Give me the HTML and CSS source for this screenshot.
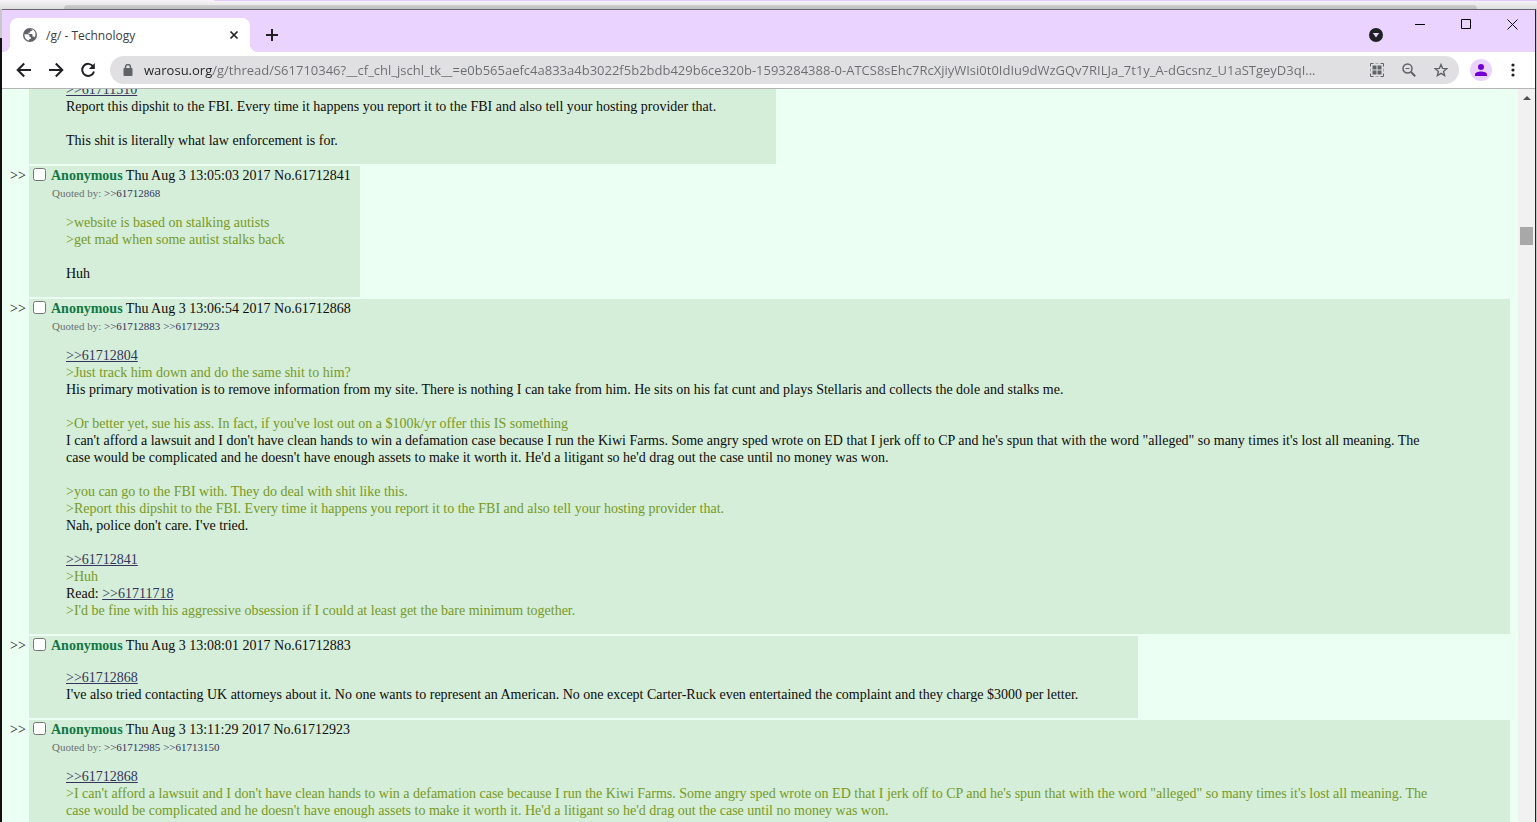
FILE: index.html
```html
<!DOCTYPE html>
<html lang="en">
<head>
<meta charset="utf-8">
<title>/g/ - Technology</title>
<link rel="stylesheet" href="styles.css">
</head>
<body>
<div class="backdrop"><div class="backdrop-bar"></div></div>
<div class="window">
  <header class="tabs">
    <div class="tab">
      <svg class="globe" viewBox="0 0 14 14" width="14" height="14" aria-hidden="true"><circle cx="7" cy="7" r="7" fill="#5f6368"/><path d="M1.500 6.200H4.500c1.200 0 2 .8 2 1.800v1h1.300v1.500c0 .5-.3.800-.8.800H6v1.200C3.200 12 1.200 9.500 1.500 6.200zM7 1.500h2.500c2 .9 3 2.700 3 5 0 1-.3 2-.8 2.800-.3-.6-.8-.9-1.500-.9H9.500V6.800c0-.5-.3-.8-.8-.8H5.500V4.800h1c.5 0 .8-.3.8-.8V3h1c.6 0 1-.4 1-1z" fill="#fff"/></svg>
      <span class="tab-title">/g/ - Technology</span>
      <button class="tab-close" aria-label="Close tab"><svg viewBox="0 0 10 10" width="10" height="10"><path d="M1.500 1.500l7 7M8.500 1.500l-7 7" stroke="#202124" stroke-width="1.700"/></svg></button>
    </div>
    <button class="new-tab" aria-label="New tab"><svg viewBox="0 0 12 12" width="12" height="12"><path d="M6 0v12M0 6h12" stroke="#202124" stroke-width="2"/></svg></button>
    <button class="search-tabs" aria-label="Search tabs"><svg viewBox="0 0 14 14" width="14" height="14"><circle cx="7" cy="7" r="7" fill="#202124"/><path d="M3.800 5h6.400L7 9.500z" fill="#ebd3ff"/></svg></button>
    <div class="controls">
      <button aria-label="Minimize"><svg viewBox="0 0 11 11" width="11" height="11"><path d="M0 5.500h10" stroke="#000"/></svg></button>
      <button aria-label="Maximize"><svg viewBox="0 0 11 11" width="11" height="11"><path d="M.5.5h9v9h-9z" fill="none" stroke="#000"/></svg></button>
      <button aria-label="Close"><svg viewBox="0 0 11 11" width="11" height="11"><path d="M.5.500l10 10M10.500.500l-10 10" stroke="#000"/></svg></button>
    </div>
  </header>
  <nav class="toolbar">
    <button aria-label="Back"><svg viewBox="0 0 16 16" width="16" height="16"><path d="M15 8H2M8.200 1.500 1.700 8l6.500 6.500" fill="none" stroke="#202124" stroke-width="2"/></svg></button>
    <button aria-label="Forward"><svg viewBox="0 0 16 16" width="16" height="16"><path d="M1 8h13M7.800 1.500 14.300 8l-6.500 6.500" fill="none" stroke="#202124" stroke-width="2"/></svg></button>
    <button aria-label="Reload"><svg viewBox="0 0 16 16" width="16" height="16"><path d="M13.200 4.500A6 6 0 1 0 14 9.500" fill="none" stroke="#202124" stroke-width="2"/><path d="M14.800 1v6H8.800z" fill="#202124"/></svg></button>
    <div class="omnibox">
      <svg viewBox="0 0 10 12" width="10" height="12" aria-hidden="true"><path d="M2.500 5V3a2.500 2.500 0 0 1 5 0v2" fill="none" stroke="#5f6368" stroke-width="1.400"/><rect x=".5" y="4" width="9" height="8" rx="1" fill="#5f6368"/></svg>
      <input class="url" type="text" aria-label="Address" value="warosu.org/g/thread/S61710346?__cf_chl_jschl_tk__=e0b565aefc4a833a4b3022f5b2bdb429b6ce320b-1593284388-0-ATCS8sEhc7RcXjiyWIsi0t0IdIu9dWzGQv7RILJa_7t1y_A-dGcsnz_U1aSTgeyD3qI...">
      <button aria-label="QR code"><svg viewBox="0 0 14 14" width="14" height="14"><path d="M.5 3.500v-3h3M10.500.500h3v3M.500 10.500v3h3M10.500 13.500h3v-3" fill="none" stroke="#5f6368"/><path d="M5.500.500h3M5.500 13.500h3M.5 5.500v3M13.500 5.500v3" stroke="#a5a6a9"/><path d="M2.500 2.500h4v4h-4zM7.500 2.500h4v4h-4zM2.500 7.500h4v4h-4zM7.500 7.500h4v4h-4z" fill="#5f6368"/></svg></button>
      <button aria-label="Zoom"><svg viewBox="0 0 14 14" width="14" height="14"><circle cx="5.500" cy="5.500" r="4.500" fill="none" stroke="#5f6368" stroke-width="1.500"/><path d="M3.500 5.500h4" stroke="#5f6368"/><path d="m9 9 4.200 4.200" stroke="#5f6368" stroke-width="2"/></svg></button>
      <button aria-label="Bookmark"><svg viewBox="0 0 14 14" width="14" height="14"><path d="m7 1.500 1.600 3.900 4.200.3-3.200 2.700 1 4.100L7 10.300l-3.600 2.200 1-4.100L1.200 5.700l4.200-.3z" fill="none" stroke="#5f6368" stroke-width="1.400"/></svg></button>
    </div>
    <button class="avatar" aria-label="Profile"><svg viewBox="0 0 12 12" width="12" height="12"><circle cx="6" cy="3" r="3" fill="#7300d4"/><path d="M0 12v-1.500C0 8.500 3 7.500 6 7.500s6 1 6 3V12z" fill="#7300d4"/></svg></button>
    <button class="menu" aria-label="Menu"><svg viewBox="0 0 4 14" width="4" height="14"><circle cx="2" cy="2" r="1.600" fill="#202124"/><circle cx="2" cy="7" r="1.600" fill="#202124"/><circle cx="2" cy="12" r="1.600" fill="#202124"/></svg></button>
  </nav>
  <div class="viewport">
    <main class="thread">
      <article class="post">
        <div class="reply">
          <p class="message"><a href="#61711510">&gt;&gt;61711510</a><br>Report this dipshit to the FBI. Every time it happens you report it to the FBI and also tell your hosting provider that.<br><br>This shit is literally what law enforcement is for.</p>
        </div>
      </article>
      <article class="post">
        <span class="marker">&gt;&gt;</span>
        <div class="reply">
          <div class="head"><label><input type="checkbox"><b>Anonymous</b> Thu Aug 3 13:05:03 2017</label> <a href="#61712841">No.61712841</a></div>
          <div class="quoted">Quoted by: <a href="#61712868">&gt;&gt;61712868</a></div>
          <p class="message"><q>&gt;website is based on stalking autists</q><br><q>&gt;get mad when some autist stalks back</q><br><br>Huh</p>
        </div>
      </article>
      <article class="post">
        <span class="marker">&gt;&gt;</span>
        <div class="reply">
          <div class="head"><label><input type="checkbox"><b>Anonymous</b> Thu Aug 3 13:06:54 2017</label> <a href="#61712868">No.61712868</a></div>
          <div class="quoted">Quoted by: <a href="#61712883">&gt;&gt;61712883</a> <a href="#61712923">&gt;&gt;61712923</a></div>
          <p class="message"><a href="#61712804">&gt;&gt;61712804</a><br><q>&gt;Just track him down and do the same shit to him?</q><br>His primary motivation is to remove information from my site. There is nothing I can take from him. He sits on his fat cunt and plays Stellaris and collects the dole and stalks me.<br><br><q>&gt;Or better yet, sue his ass. In fact, if you've lost out on a $100k/yr offer this IS something</q><br>I can't afford a lawsuit and I don't have clean hands to win a defamation case because I run the Kiwi Farms. Some angry sped wrote on ED that I jerk off to CP and he's spun that with the word "alleged" so many times it's lost all meaning. The case&nbsp;would be complicated and he doesn't have enough assets to make it worth it. He'd a litigant so he'd drag out the case until no money was won.<br><br><q>&gt;you can go to the FBI with. They do deal with shit like this.</q><br><q>&gt;Report this dipshit to the FBI. Every time it happens you report it to the FBI and also tell your hosting provider that.</q><br>Nah, police don't care. I've tried.<br><br><a href="#61712841">&gt;&gt;61712841</a><br><q>&gt;Huh</q><br>Read: <a href="#61711718">&gt;&gt;61711718</a><br><q>&gt;I'd be fine with his aggressive obsession if I could at least get the bare minimum together.</q></p>
        </div>
      </article>
      <article class="post">
        <span class="marker">&gt;&gt;</span>
        <div class="reply">
          <div class="head"><label><input type="checkbox"><b>Anonymous</b> Thu Aug 3 13:08:01 2017</label> <a href="#61712883">No.61712883</a></div>
          <p class="message"><a href="#61712868">&gt;&gt;61712868</a><br>I've also tried contacting UK attorneys about it. No one wants to represent an American. No one except Carter-Ruck even entertained the complaint and they charge $3000 per letter.</p>
        </div>
      </article>
      <article class="post">
        <span class="marker">&gt;&gt;</span>
        <div class="reply">
          <div class="head"><label><input type="checkbox"><b>Anonymous</b> Thu Aug 3 13:11:29 2017</label> <a href="#61712923">No.61712923</a></div>
          <div class="quoted">Quoted by: <a href="#61712985">&gt;&gt;61712985</a> <a href="#61713150">&gt;&gt;61713150</a></div>
          <p class="message"><a href="#61712868">&gt;&gt;61712868</a><br><q>&gt;I can't afford a lawsuit and I don't have clean hands to win a defamation case because I run the Kiwi Farms. Some angry sped wrote on ED that I jerk off to CP and he's spun that with the word "alleged" so many times it's lost all meaning. The case&nbsp;would be complicated and he doesn't have enough assets to make it worth it. He'd a litigant so he'd drag out the case until no money was won.</q></p>
        </div>
      </article>
    </main>
    <div class="scrollbar"><svg viewBox="0 0 8 4" width="8" height="4" aria-hidden="true"><path d="M4 0 8 4H0z" fill="#505050"/></svg><div class="thumb"></div></div>
  </div>
</div>
</body>
</html>
```
FILE: styles.css
```css
* { box-sizing: border-box; }
body {
  margin: 0;
  height: 100vh;
  overflow: hidden;
  display: flex;
  flex-direction: column;
  background: linear-gradient(#c8c8c8 38px, #111 38px) 0 0 / 2px 100% no-repeat, #c4c4c4;
}
button {
  border: 0;
  padding: 0;
  background: none;
  display: flex;
  align-items: center;
  justify-content: center;
  flex: none;
}
svg { display: block; flex: none; }
.backdrop {
  flex: none;
  height: 9px;
  padding: 5px 60px 0 64px;
  background:
    linear-gradient(90deg, transparent 214px, #e4ccf8 214px) 0 0 / 100% 1px no-repeat,
    linear-gradient(#f8f4f8, #dedede);
}
.backdrop-bar {
  height: 4px;
  border-radius: 12px 12px 0 0;
  background: linear-gradient(#cecece, #bcbcbc);
}
.window {
  flex: 1;
  min-height: 0;
  display: flex;
  flex-direction: column;
  margin: 0 1px 0 2px;
  border-top: 1px solid #6b6372;
  border-right: 1px solid #222;
}
.tabs {
  flex: none;
  display: flex;
  align-items: flex-end;
  height: 42px;
  padding-left: 8px;
  background: #ebd3ff;
}
.tab {
  position: relative;
  display: flex;
  align-items: center;
  width: 240px;
  height: 34px;
  padding: 0 10px 0 13px;
  border-radius: 8px 8px 0 0;
  background: #fff;
  font: 12px "Open Sans", sans-serif;
  color: #3c4043;
}
.tab::before,
.tab::after {
  content: "";
  position: absolute;
  bottom: 0;
  width: 8px;
  height: 8px;
}
.tab::before { right: 100%; background: radial-gradient(circle at 0 0, transparent 8px, #fff 8px); }
.tab::after { left: 100%; background: radial-gradient(circle at 100% 0, transparent 8px, #fff 8px); }
.tab-title { flex: 1; padding-left: 9px; }
.tab-close { width: 12px; height: 16px; }
.new-tab { width: 28px; height: 34px; margin-left: 8px; }
.search-tabs { margin: 0 7px 0 auto; width: 28px; height: 34px; }
.controls { display: flex; align-self: flex-start; }
.controls button { width: 46px; height: 29px; }
.toolbar {
  flex: none;
  display: flex;
  align-items: center;
  height: 37px;
  padding: 0 6px;
  background: #fff;
  border-bottom: 1px solid #b4b4b4;
}
.toolbar > button { width: 32px; height: 28px; }
.omnibox {
  flex: 1;
  min-width: 0;
  display: flex;
  align-items: center;
  height: 28px;
  margin: 0 6px;
  padding: 0 2px 0 13px;
  border-radius: 14px;
  background: #e0e0e2;
}
.omnibox button { width: 32px; height: 28px; }
.url {
  flex: 1;
  min-width: 0;
  border: 0;
  padding: 0;
  margin: 0 11px;
  outline: 0;
  font: 13px "Open Sans", sans-serif;
  color: transparent;
  background: linear-gradient(90deg, #202124 69px, #6a6c70 69px);
  background-clip: text;
}
.toolbar .avatar { width: 22px; height: 22px; margin: 0 5px; border-radius: 50%; background: #ebd3ff; }
.viewport {
  flex: 1;
  min-height: 0;
  display: flex;
  overflow: hidden;
  background: #ebfff3;
}
.thread {
  flex: 1;
  min-width: 0;
  display: flex;
  flex-direction: column;
  gap: 2px;
  margin-top: -8px;
  padding: 0 8px;
  font: 14px/17px "Liberation Serif", "Times New Roman", serif;
  color: #0f0c0a;
}
.post {
  display: grid;
  grid-template-columns: 19px minmax(0, max-content);
}
.reply {
  grid-column: 2;
  background: #d4eed9;
}
.marker { grid-row: 1; padding-top: 1px; }
.head { height: 19px; padding: 1px 9px 0 4px; line-height: 18px; white-space: nowrap; }
.head input { width: 13px; height: 13px; margin: 0 5px 0 0; vertical-align: -1px; }
.head b { color: #117743; }
.head a { color: inherit; text-decoration: none; }
.quoted { padding: 1px 0 0 23px; font-size: 11px; line-height: 15px; color: #707070; }
.quoted a { color: #34345c; text-decoration: none; }
.message { margin: 0 60px 0 37px; padding-bottom: 15px; }
.head + .message { padding-top: 14px; }
.quoted + .message { padding-top: 13px; }
.message a { color: #34345c; }
q { quotes: none; color: #789922; }
.scrollbar {
  flex: none;
  width: 17px;
  display: flex;
  flex-direction: column;
  align-items: center;
  padding-top: 7px;
  background: #f1f1f1;
}
.thumb { width: 13px; height: 18px; margin-top: 127px; background: #a8a8a8; }
```
